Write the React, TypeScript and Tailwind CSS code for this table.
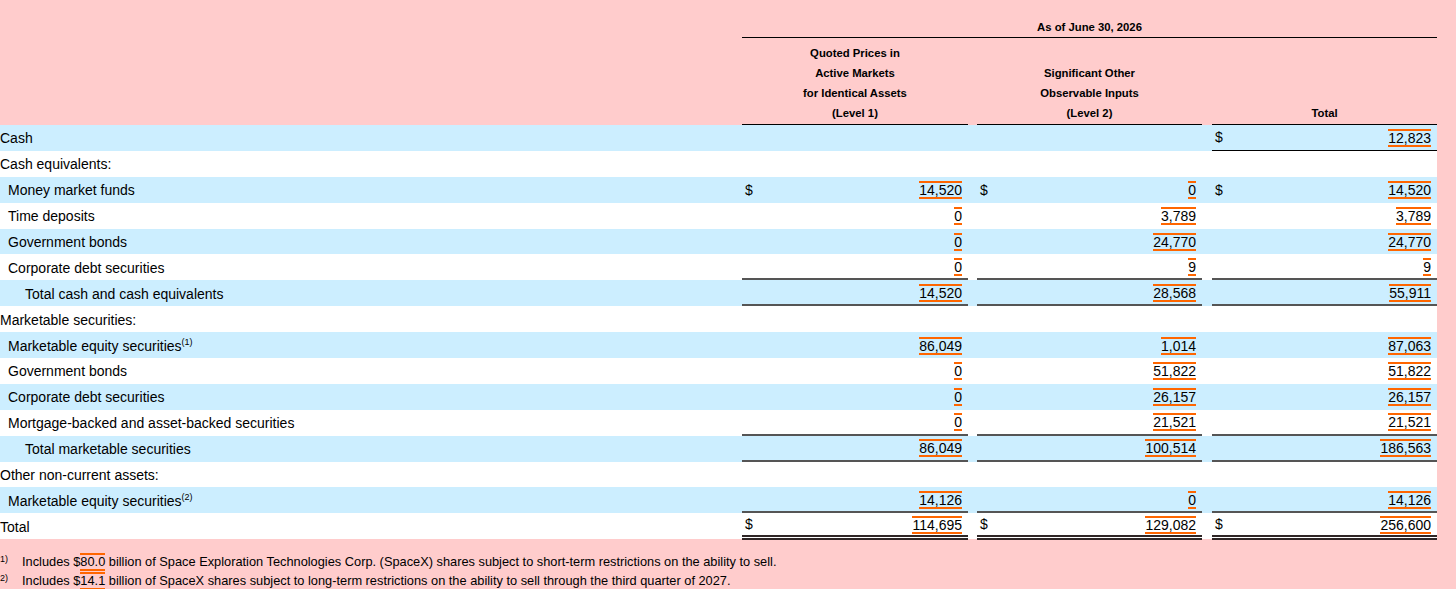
type Cell = { dollar?: boolean; value?: string }

interface Row {
  label: string
  indent: 0 | 1 | 2
  sup?: string
  cells?: [Cell | null, Cell | null, Cell | null]
  rule?: 'single' | 'double'
  cashRule?: boolean
}

const rows: Row[] = [
  { label: 'Cash', indent: 0, cells: [null, null, { dollar: true, value: '12,823' }], cashRule: true },
  { label: 'Cash equivalents:', indent: 0 },
  {
    label: 'Money market funds',
    indent: 1,
    cells: [
      { dollar: true, value: '14,520' },
      { dollar: true, value: '0' },
      { dollar: true, value: '14,520' },
    ],
  },
  { label: 'Time deposits', indent: 1, cells: [{ value: '0' }, { value: '3,789' }, { value: '3,789' }] },
  { label: 'Government bonds', indent: 1, cells: [{ value: '0' }, { value: '24,770' }, { value: '24,770' }] },
  {
    label: 'Corporate debt securities',
    indent: 1,
    cells: [{ value: '0' }, { value: '9' }, { value: '9' }],
    rule: 'single',
  },
  {
    label: 'Total cash and cash equivalents',
    indent: 2,
    cells: [{ value: '14,520' }, { value: '28,568' }, { value: '55,911' }],
    rule: 'single',
  },
  { label: 'Marketable securities:', indent: 0 },
  {
    label: 'Marketable equity securities',
    sup: '(1)',
    indent: 1,
    cells: [{ value: '86,049' }, { value: '1,014' }, { value: '87,063' }],
  },
  { label: 'Government bonds', indent: 1, cells: [{ value: '0' }, { value: '51,822' }, { value: '51,822' }] },
  { label: 'Corporate debt securities', indent: 1, cells: [{ value: '0' }, { value: '26,157' }, { value: '26,157' }] },
  {
    label: 'Mortgage-backed and asset-backed securities',
    indent: 1,
    cells: [{ value: '0' }, { value: '21,521' }, { value: '21,521' }],
    rule: 'single',
  },
  {
    label: 'Total marketable securities',
    indent: 2,
    cells: [{ value: '86,049' }, { value: '100,514' }, { value: '186,563' }],
    rule: 'single',
  },
  { label: 'Other non-current assets:', indent: 0 },
  {
    label: 'Marketable equity securities',
    sup: '(2)',
    indent: 1,
    cells: [{ value: '14,126' }, { value: '0' }, { value: '14,126' }],
    rule: 'single',
  },
  {
    label: 'Total',
    indent: 0,
    cells: [
      { dollar: true, value: '114,695' },
      { dollar: true, value: '129,082' },
      { dollar: true, value: '256,600' },
    ],
    rule: 'double',
  },
]

const grid = 'grid grid-cols-[742px_226px_9px_225px_10px_225px] w-[1437px]'

function Tagged({ children }: { children: string }) {
  return <span className="inline-block border-y-2 border-[#ff6600] leading-[14px]">{children}</span>
}

function ValueCell({ cell, rule, cashRule }: { cell: Cell | null; rule?: Row['rule']; cashRule?: boolean }) {
  let border = ''
  if (rule === 'single') border = 'border-b-2 border-[#555]'
  if (rule === 'double') border = 'border-b-[5px] border-double border-[#2f2626]'
  if (cashRule && cell) border = 'border-b border-black'

  return (
    <div className={`flex items-center justify-between pl-[3px] pr-[6px] pt-px ${border}`}>
      <span>{cell?.dollar ? '$' : ''}</span>
      {cell?.value && <Tagged>{cell.value}</Tagged>}
    </div>
  )
}

export default function App() {
  return (
    <div className="min-h-screen w-full bg-[#ffcccc] pt-px text-black font-['Liberation_Sans',Arial,sans-serif]">
      {/* column headings */}
      <div className={`${grid} text-[11.3px] font-bold`}>
        <div />
        <div className="col-span-5 border-b border-black pt-[16px] text-center leading-[20px]">
          As of June 30, 2026
        </div>
      </div>
      <div className={`${grid} h-[87px] text-[11.3px] font-bold leading-[20px]`}>
        <div />
        <div className="flex flex-col justify-end border-b border-black pb-px text-center">
          <div>Quoted Prices in</div>
          <div>Active Markets</div>
          <div>for Identical Assets</div>
          <div>(Level 1)</div>
        </div>
        <div />
        <div className="flex flex-col justify-end border-b border-black pb-px text-center">
          <div>Significant Other</div>
          <div>Observable Inputs</div>
          <div>(Level 2)</div>
        </div>
        <div />
        <div className="flex flex-col justify-end border-b border-black pb-px text-center">
          <div>Total</div>
        </div>
      </div>

      {/* body */}
      <div className="text-[14px]">
        {rows.map((row, i) => (
          <div key={i} className={`${grid} h-[25.9px] ${i % 2 === 0 ? 'bg-[#cceeff]' : 'bg-white'}`}>
            <div
              className={`flex items-center whitespace-nowrap pt-[2px] ${
                row.indent === 0 ? 'pl-0' : row.indent === 1 ? 'pl-[8px]' : 'pl-[25px]'
              }`}
            >
              {row.label}
              {row.sup && <sup className="text-[9px]">{row.sup}</sup>}
            </div>
            <ValueCell cell={row.cells?.[0] ?? null} rule={row.rule} />
            <div />
            <ValueCell cell={row.cells?.[1] ?? null} rule={row.rule} />
            <div />
            <ValueCell cell={row.cells?.[2] ?? null} rule={row.rule} cashRule={row.cashRule} />
          </div>
        ))}
      </div>

      {/* footnotes */}
      <div className="pt-[13px] text-[12.8px] leading-[19px]">
        <div className="flex">
          <span className="w-[22px] text-[9px] leading-[14px]">1)</span>
          <span>
            Includes $<Tagged>80.0</Tagged> billion of Space Exploration Technologies Corp. (SpaceX) shares subject to
            short-term restrictions on the ability to sell.
          </span>
        </div>
        <div className="flex">
          <span className="w-[22px] text-[9px] leading-[14px]">2)</span>
          <span>
            Includes $<Tagged>14.1</Tagged> billion of SpaceX shares subject to long-term restrictions on the ability to
            sell through the third quarter of 2027.
          </span>
        </div>
      </div>
    </div>
  )
}
